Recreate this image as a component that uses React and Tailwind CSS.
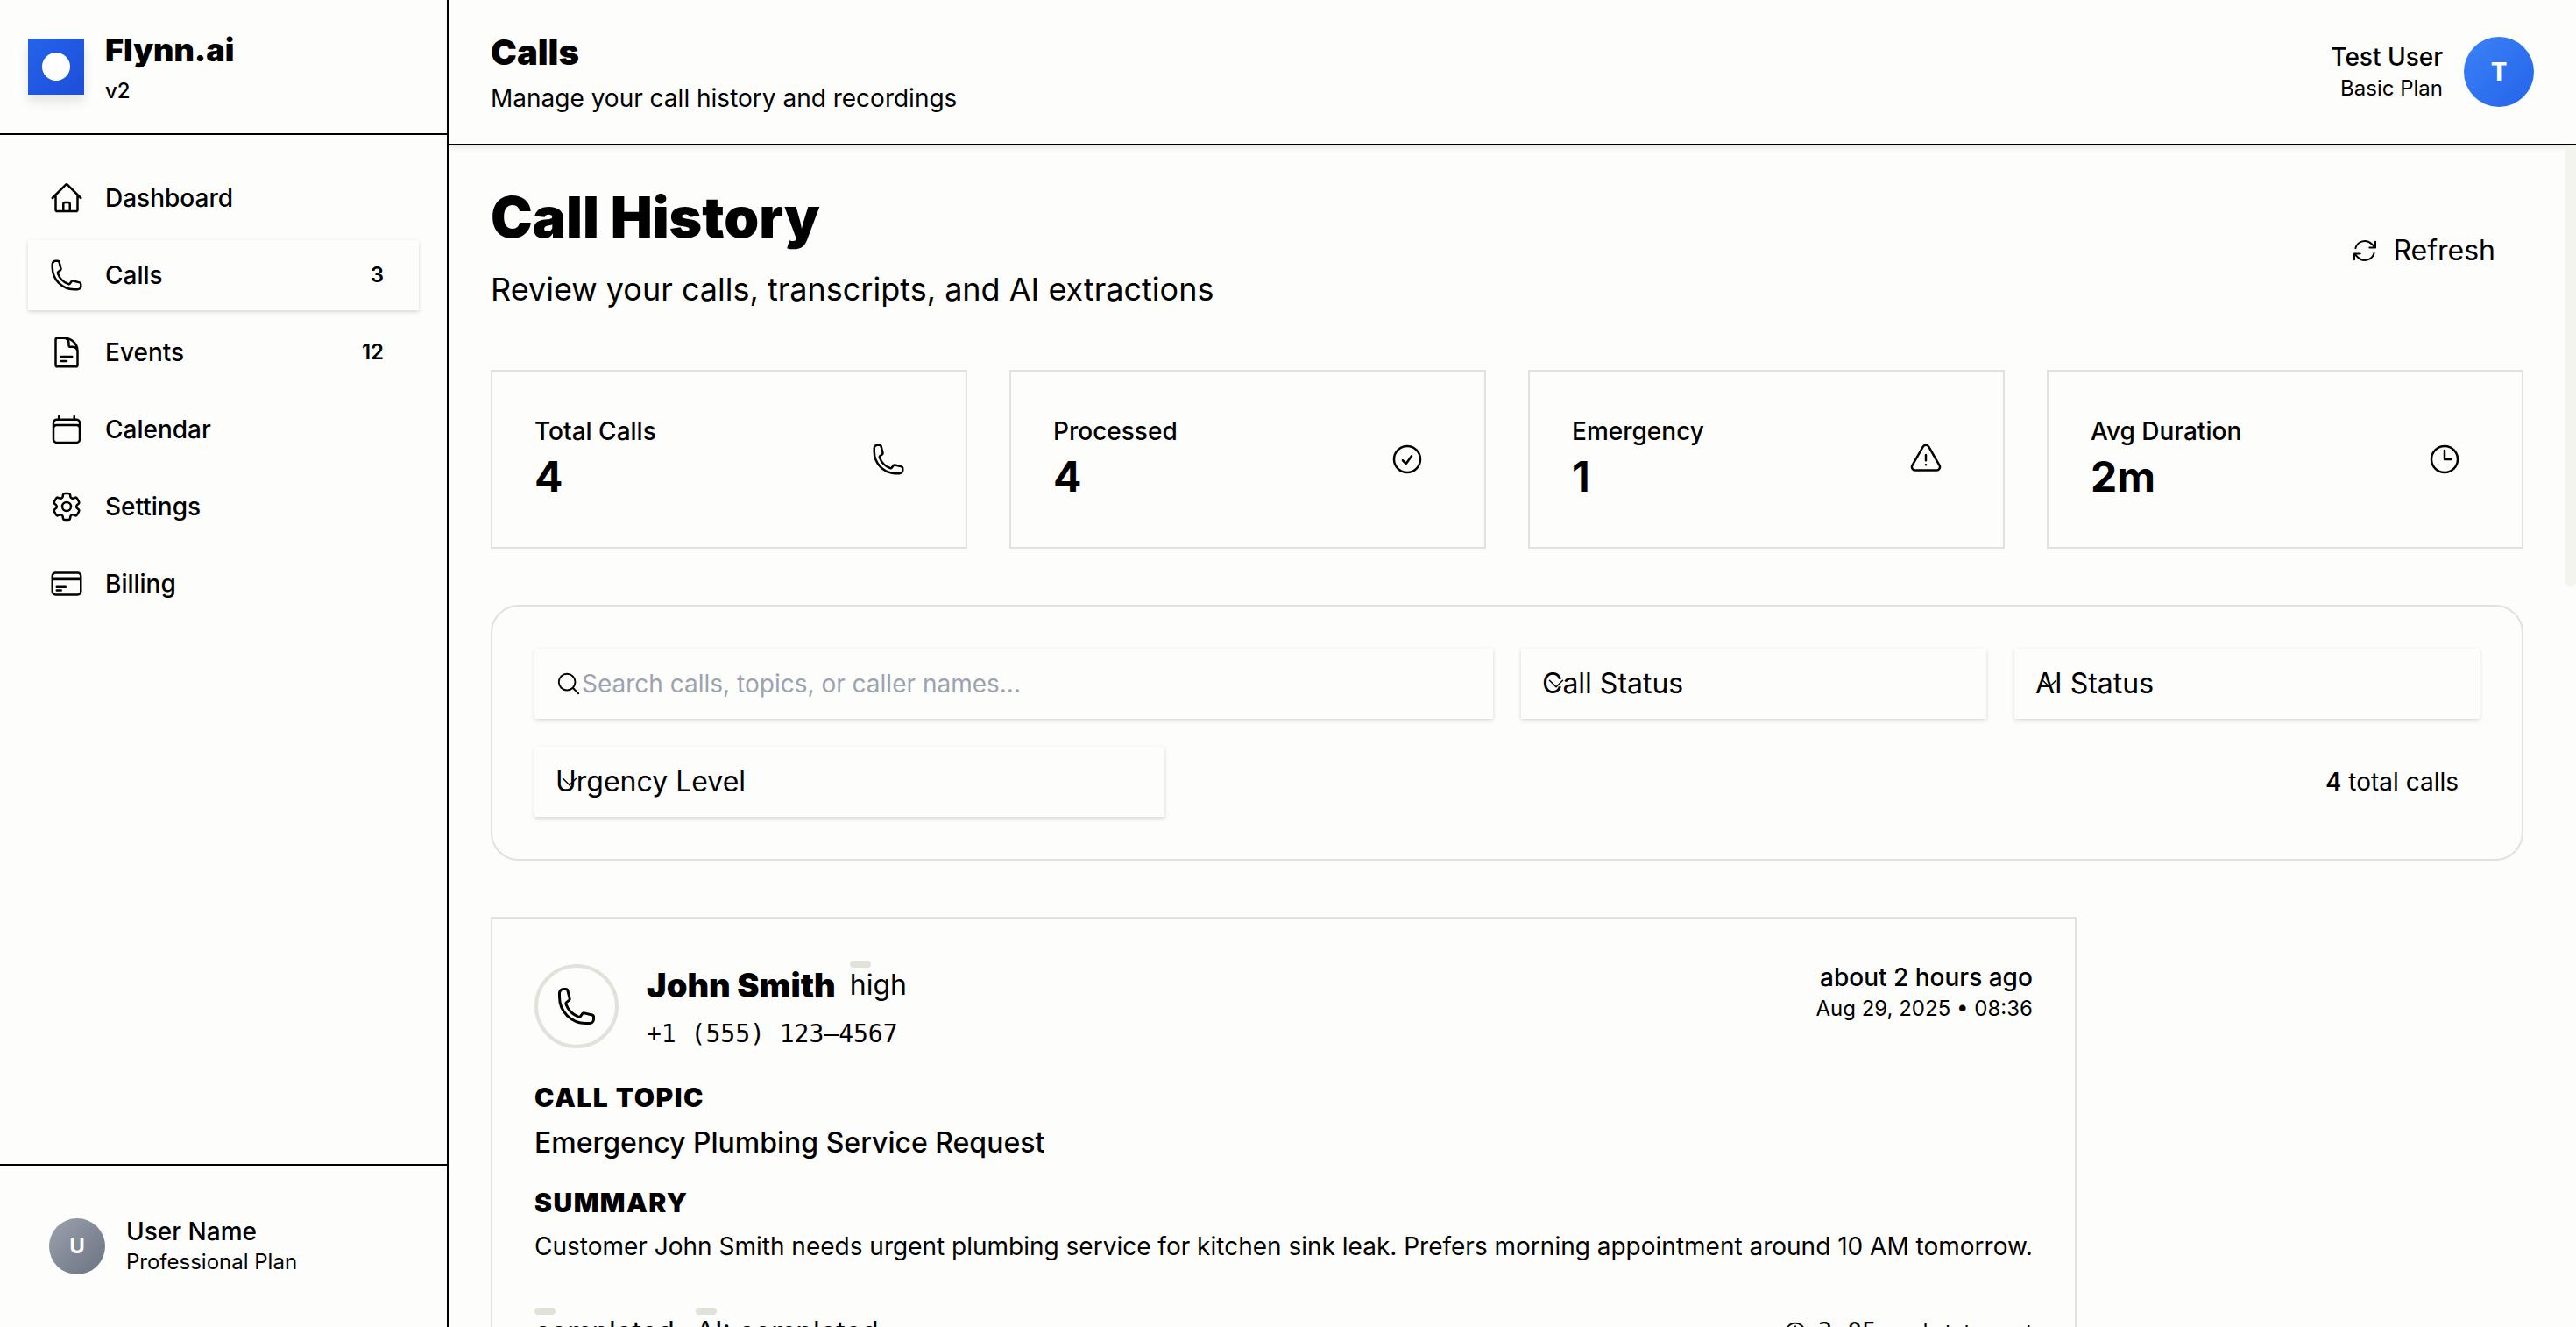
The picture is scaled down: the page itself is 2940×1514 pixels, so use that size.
import {
  HiOutlineHome,
  HiOutlinePhone,
  HiOutlineDocumentText,
  HiOutlineCalendar,
  HiOutlineCog6Tooth,
  HiOutlineCreditCard,
  HiOutlineArrowPath,
  HiOutlineCheckCircle,
  HiOutlineExclamationTriangle,
  HiOutlineClock,
  HiOutlineMagnifyingGlass,
  HiOutlineChevronDown,
} from "react-icons/hi2";

const NAV = [
  { label: "Dashboard", Icon: HiOutlineHome },
  { label: "Calls", Icon: HiOutlinePhone, count: 3, active: true },
  { label: "Events", Icon: HiOutlineDocumentText, count: 12 },
  { label: "Calendar", Icon: HiOutlineCalendar },
  { label: "Settings", Icon: HiOutlineCog6Tooth },
  { label: "Billing", Icon: HiOutlineCreditCard },
];

const STATS = [
  { label: "Total Calls", value: "4", Icon: HiOutlinePhone },
  { label: "Processed", value: "4", Icon: HiOutlineCheckCircle },
  { label: "Emergency", value: "1", Icon: HiOutlineExclamationTriangle },
  { label: "Avg Duration", value: "2m", Icon: HiOutlineClock },
];

const FIELD_SHADOW = "shadow-[0_2px_6px_rgba(0,0,0,0.08),0_2px_4px_rgba(0,0,0,0.08)]";

function Sidebar() {
  return (
    <aside className="flex w-[512px] shrink-0 flex-col border-r-2 border-black">
      <div className="flex h-[154px] items-center gap-6 border-b-2 border-black px-8">
        <div className="flex size-16 items-center justify-center bg-linear-to-br from-[#2563eb] to-[#1d4ed8] shadow-[0_8px_12px_rgba(0,0,0,0.1)]">
          <div className="size-8 rounded-full bg-white" />
        </div>
        <div className="pt-1">
          <div className="text-[36px] leading-[48px] font-black">Flynn.ai</div>
          <div className="mt-1 text-[24px] leading-[38px] font-medium">v2</div>
        </div>
      </div>
      <nav className="flex flex-1 flex-col gap-2 px-8 pt-8">
        {NAV.map(({ label, Icon, count, active }) => (
          <a
            key={label}
            href="#"
            className={`flex h-20 items-center gap-6 pr-10 pl-6 text-[28px] font-medium ${active ? FIELD_SHADOW : ""}`}
          >
            <Icon className="size-10" />
            <span className="flex-1">{label}</span>
            {count && <span className="text-[24px] font-semibold">{count}</span>}
          </a>
        ))}
      </nav>
      <div className="flex h-[186px] items-center gap-6 border-t-2 border-black pl-14">
        <div className="flex size-16 items-center justify-center rounded-full bg-linear-to-br from-[#9ca3af] to-[#6b7280] text-[24px] font-bold text-white">
          U
        </div>
        <div>
          <div className="text-[28px] leading-[36px] font-medium">User Name</div>
          <div className="text-[24px] leading-[34px]">Professional Plan</div>
        </div>
      </div>
    </aside>
  );
}

function Header() {
  return (
    <header className="relative flex h-[166px] shrink-0 items-center justify-between border-b-2 border-black px-12 shadow-[0_2px_6px_rgba(0,0,0,0.1)]">
      <div className="pt-1">
        <h1 className="text-[40px] leading-[56px] font-black">Calls</h1>
        <p className="text-[28px] leading-[48px]">Manage your call history and recordings</p>
      </div>
      <div className="flex items-center gap-6">
        <div className="text-right">
          <div className="text-[28px] leading-[38px] font-medium">Test User</div>
          <div className="text-[24px] leading-[34px]">Basic Plan</div>
        </div>
        <div className="flex size-20 items-center justify-center rounded-full bg-linear-to-br from-[#3b82f6] to-[#2563eb] text-[28px] font-bold text-white">
          T
        </div>
      </div>
    </header>
  );
}

function FilterButton({ label, className }) {
  return (
    <button className={`relative flex h-20 items-center px-6 text-left text-[32px] ${FIELD_SHADOW} ${className}`}>
      <HiOutlineChevronDown className="absolute left-7 size-6" />
      {label}
    </button>
  );
}

function Filters() {
  return (
    <section className="mt-16 grid grid-cols-12 gap-8 rounded-[32px] border-2 border-[#e2e2da] p-12">
      <label className={`col-span-6 flex h-20 items-center px-6 ${FIELD_SHADOW}`}>
        <HiOutlineMagnifyingGlass className="size-[30px] shrink-0" aria-label="Search" />
        <input
          type="text"
          placeholder="Search calls, topics, or caller names..."
          className="min-w-0 flex-1 bg-transparent text-[28px] outline-none placeholder:text-[#9ca3af]"
        />
      </label>
      <FilterButton label="Call Status" className="col-span-3" />
      <FilterButton label="AI Status" className="col-span-3" />
      <FilterButton label="Urgency Level" className="col-span-4" />
      <div className="col-span-8 flex items-center justify-end pr-6 text-[28px]">
        <p>
          <span className="font-medium">4</span> total calls
        </p>
      </div>
    </section>
  );
}

function Badge({ children }) {
  return (
    <span className="relative text-[32px] leading-[48px]">
      <span className="absolute -top-1 left-0 h-2 w-6 rounded-[4px] bg-[#e2e2da]" />
      {children}
    </span>
  );
}

function CallCard() {
  return (
    <article className="mt-16 w-fit border-2 border-[#e2e2da] px-12 py-12">
      <div className="flex items-start gap-8">
        <div className="mt-1 flex size-24 shrink-0 items-center justify-center rounded-full border-4 border-[#e2e2da]">
          <HiOutlinePhone className="size-12" />
        </div>
        <div className="flex-1">
          <div className="flex items-center gap-4">
            <h3 className="text-[38px] leading-[56px] font-black">John Smith</h3>
            <Badge>high</Badge>
          </div>
          <div className="font-['DejaVu_Sans_Mono',monospace] text-[28px] leading-[56px]">+1 (555) 123–4567</div>
        </div>
        <div className="text-right">
          <div className="text-[28px] leading-[38px] font-medium">about 2 hours ago</div>
          <div className="text-[24px] leading-[34px]">Aug 29, 2025 • 08:36</div>
        </div>
      </div>
      <h4 className="mt-4 text-[30px] leading-[56px] font-black tracking-wider uppercase">Call topic</h4>
      <p className="text-[32px] leading-[48px] font-medium">Emergency Plumbing Service Request</p>
      <h4 className="mt-4 text-[30px] leading-[56px] font-black tracking-wider uppercase">Summary</h4>
      <p className="text-[28px] leading-[44px] whitespace-nowrap">
        Customer John Smith needs urgent plumbing service for kitchen sink leak. Prefers morning appointment around 10 AM
        tomorrow.
      </p>
      <div className="mt-[52px] flex items-center justify-between">
        <div className="flex gap-6">
          <Badge>completed</Badge>
          <Badge>AI: completed</Badge>
        </div>
        <div className="flex items-center text-[28px] leading-[48px]">
          <HiOutlineClock className="mr-3 size-7" />
          <span className="font-['DejaVu_Sans_Mono',monospace]">3:05</span>
          <span className="ml-4 text-[24px]">and statement</span>
        </div>
      </div>
    </article>
  );
}

export default function App() {
  return (
    <div className="flex h-screen overflow-hidden bg-[#fdfdfc] font-['Inter',sans-serif] text-black">
      <Sidebar />
      <div className="relative flex min-w-0 flex-1 flex-col">
        <Header />
        <main className="min-h-0 flex-1 overflow-hidden pt-12 pr-[60px] pl-12">
          <div className="flex items-center justify-between pr-8">
            <div>
              <h2 className="text-[64px] leading-[68px] font-black">Call History</h2>
              <p className="mt-5 text-[36px] leading-[56px]">Review your calls, transcripts, and AI extractions</p>
            </div>
            <button className="flex items-center gap-4 text-[32px]">
              <HiOutlineArrowPath className="size-8" />
              Refresh
            </button>
          </div>
          <section className="mt-16 grid grid-cols-4 gap-12">
            {STATS.map(({ label, value, Icon }) => (
              <div key={label} className="flex h-[204px] items-center justify-between border-2 border-[#e2e2da] pr-[68px] pl-12">
                <div className="pb-1">
                  <div className="text-[28px] leading-[44px] font-medium">{label}</div>
                  <div className="text-[48px] leading-[60px] font-bold">{value}</div>
                </div>
                <Icon className="size-10" />
              </div>
            ))}
          </section>
          <Filters />
          <CallCard />
        </main>
        <div className="absolute top-[166px] right-0 h-[504px] w-3 rounded-[6px] bg-[#f4f4ef]" />
      </div>
    </div>
  );
}
